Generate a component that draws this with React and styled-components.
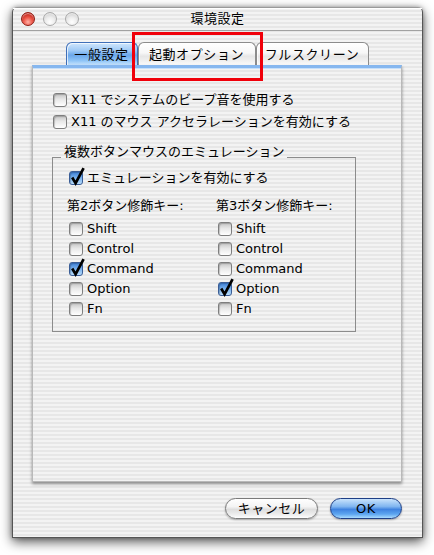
import React from 'react'
import styled, { createGlobalStyle, css } from 'styled-components';

const GlobalStyle = createGlobalStyle`
    body {
        margin: 0;
        background: #ffffff;
    }
`;

const pinstripe = css`
    background-image: repeating-linear-gradient(to bottom, #f3f3f3 0px, #f3f3f3 2px, #e7e7e7 2px, #e7e7e7 4px);
    background-attachment: fixed;
`;

const font = `"Lucida Grande", "DejaVu Sans", "Noto Sans CJK JP", sans-serif`;

const Page = styled.div`
    position: relative;
    width: 434px;
    height: 555px;
    box-sizing: border-box;
    padding: 7px 0 0 12px;
    font-family: ${font};
    font-size: 13px;
    color: #000;
    overflow: hidden;
`;

const Window = styled.div`
    width: 411px;
    height: 531px;
    box-sizing: border-box;
    border: 1px solid #555555;
    border-top-color: #9a9a9a;
    border-radius: 5px 5px 0 0;
    display: flex;
    flex-direction: column;
    box-shadow: 0 4px 12px rgba(0, 0, 0, 0.65), 0 0 4px rgba(0, 0, 0, 0.3);
    ${pinstripe};
`;

const TitleBar = styled.div`
    height: 22px;
    border-bottom: 1px solid #a2a2a2;
    display: grid;
    grid-template-columns: 1fr auto 1fr;
    align-items: center;
    box-shadow: inset 0 1px 0 #ffffff;
`;

const Lights = styled.div`
    display: flex;
    gap: 8px;
    padding-left: 8px;
`;

const Light = styled.span`
    width: 14px;
    height: 14px;
    box-sizing: border-box;
    border-radius: 50%;
    border: 1px solid ${({ $red }) => ($red ? '#8e1b12' : '#a9a9a9')};
    background: ${({ $red }) =>
        $red
            ? 'radial-gradient(circle at 50% 75%, #ffb2a8 0%, #ee5a4c 40%, #b8160c 85%)'
            : 'radial-gradient(circle at 50% 75%, #ffffff 0%, #ececec 45%, #c8c8c8 90%)'};
    box-shadow: inset 0 1px 1px rgba(255, 255, 255, 0.6);
`;

const Title = styled.div`
    font-size: 13px;
    line-height: 16px;
    letter-spacing: 0.5px;
`;

const Body = styled.div`
    padding: 11px 20px 0 19px;
    display: flex;
    flex-direction: column;
`;

const Tabs = styled.div`
    display: flex;
    justify-content: center;
    height: 23px;
`;

const Tab = styled.div`
    width: ${({ $w }) => $w}px;
    height: 23px;
    box-sizing: border-box;
    border: 1px solid ${({ $active }) => ($active ? '#3f6fb8' : '#8c8c8c')};
    border-bottom: none;
    border-radius: 6px 6px 0 0;
    display: flex;
    align-items: center;
    justify-content: center;
    line-height: 16px;
    padding-top: 1px;
    letter-spacing: 0.6px;
    background: ${({ $active }) =>
        $active
            ? 'linear-gradient(to bottom, #cfe6fd 0%, #9fc9f5 35%, #6aa6ea 55%, #8ec4f7 80%, #c6e3fd 100%)'
            : 'linear-gradient(to bottom, #ffffff 0%, #f7f7f7 45%, #e6e6e6 60%, #f2f2f2 85%, #fbfbfb 100%)'};
    box-shadow: inset 1px 1px 0 rgba(255, 255, 255, 0.7);
`;

const Panel = styled.div`
    height: 417px;
    box-sizing: border-box;
    border: 1px solid #b9b9b9;
    border-top: 3px solid #86b7ef;
    padding: 21px 0 0 19px;
    box-shadow: 0 2px 3px rgba(0, 0, 0, 0.4), inset 0 1px 0 #c7e0fa;
    ${pinstripe};
`;

const Row = styled.div`
    height: ${({ $h }) => $h || 20}px;
    display: flex;
    align-items: center;
    gap: 4px;
    padding-left: 1px;
    line-height: 16px;
    white-space: nowrap;
`;

const Box = styled.span`
    position: relative;
    flex: none;
    width: 14px;
    height: 14px;
    box-sizing: border-box;
    border-radius: 3px;
    border: 1px solid ${({ $checked }) => ($checked ? '#3a5d96' : '#7e7e7e')};
    background: ${({ $checked }) =>
        $checked
            ? 'linear-gradient(to bottom, #3d7fd6 0%, #79b2ee 50%, #b8dcfb 100%)'
            : 'linear-gradient(to bottom, #c4c4c4 0%, #e8e8e8 45%, #ffffff 100%)'};
    box-shadow: inset 1px 1px 1px rgba(0, 0, 0, 0.2);
`;

const Tick = styled.svg`
    position: absolute;
    left: 0;
    top: -5px;
    width: 15px;
    height: 19px;
    overflow: visible;
`;

const Group = styled.div`
    position: relative;
    width: 304px;
    box-sizing: border-box;
    margin-top: 24px;
    border: 1px solid #8c8c8c;
    padding: 10px 0 12px 15px;
`;

const GroupLabel = styled.span`
    position: absolute;
    top: -14px;
    left: 8px;
    padding: 0 3px;
    line-height: 16px;
    white-space: nowrap;
    ${pinstripe};
`;

const Columns = styled.div`
    display: grid;
    grid-template-columns: 149px 140px;
    margin-top: 8px;
`;

const ColumnLabel = styled.div`
    height: 20px;
    line-height: 20px;
    margin: 0 0 3px -1px;
    white-space: nowrap;
`;

const Buttons = styled.div`
    display: flex;
    justify-content: flex-end;
    gap: 12px;
    margin-top: 16px;
`;

const Button = styled.div`
    width: ${({ $w }) => $w}px;
    height: 21px;
    box-sizing: border-box;
    border-radius: 11px;
    border: 1px solid ${({ $primary }) => ($primary ? '#1f3f86' : '#7a7a7a')};
    display: flex;
    align-items: center;
    justify-content: center;
    line-height: 16px;
    letter-spacing: 0.5px;
    background: ${({ $primary }) =>
        $primary
            ? 'linear-gradient(to bottom, #c9e3fc 0%, #7fb5f0 40%, #3f83e0 55%, #5ea6f0 80%, #a9dbff 100%)'
            : 'linear-gradient(to bottom, #ffffff 0%, #f4f4f4 40%, #dedede 55%, #f0f0f0 85%, #ffffff 100%)'};
    box-shadow: 0 1px 2px rgba(0, 0, 0, 0.3);
`;

const Highlight = styled.div`
    position: absolute;
    left: 132px;
    top: 32px;
    width: 131px;
    height: 49px;
    box-sizing: border-box;
    border: 3px solid #f0000a;
`;

const Check = ({ checked, label, h }) => (
    <Row $h={h}>
        <Box $checked={checked}>
            {checked && (
                <Tick viewBox="0 0 15 19">
                    <path d="M2.2 10.5 L5.6 16.2 L13.6 1.2" fill="none" stroke="#000" strokeWidth="2.7" strokeLinejoin="miter" />
                </Tick>
            )}
        </Box>
        <span>{label}</span>
    </Row>
)

const keys = ['Shift', 'Control', 'Command', 'Option', 'Fn'];

const App = () => {
    return (
        <Page>
            <GlobalStyle />
            <Window>
                <TitleBar>
                    <Lights>
                        <Light $red />
                        <Light />
                        <Light />
                    </Lights>
                    <Title>環境設定</Title>
                    <div />
                </TitleBar>
                <Body>
                    <Tabs>
                        <Tab $w={72} $active>一般設定</Tab>
                        <Tab $w={118}>起動オプション</Tab>
                        <Tab $w={113}>フルスクリーン</Tab>
                    </Tabs>
                    <Panel>
                        <Check h={22} label="X11 でシステムのビープ音を使用する" />
                        <Check h={22} label="X11 のマウス アクセラレーションを有効にする" />
                        <Group>
                            <GroupLabel>複数ボタンマウスのエミュレーション</GroupLabel>
                            <Check checked label="エミュレーションを有効にする" />
                            <Columns>
                                <div>
                                    <ColumnLabel>第2ボタン修飾キー:</ColumnLabel>
                                    {keys.map(k => <Check key={k} label={k} checked={k === 'Command'} />)}
                                </div>
                                <div>
                                    <ColumnLabel>第3ボタン修飾キー:</ColumnLabel>
                                    {keys.map(k => <Check key={k} label={k} checked={k === 'Option'} />)}
                                </div>
                            </Columns>
                        </Group>
                    </Panel>
                    <Buttons>
                        <Button $w={93}>キャンセル</Button>
                        <Button $w={72} $primary>OK</Button>
                    </Buttons>
                </Body>
            </Window>
            <Highlight />
        </Page>
    )
}

export default App;
